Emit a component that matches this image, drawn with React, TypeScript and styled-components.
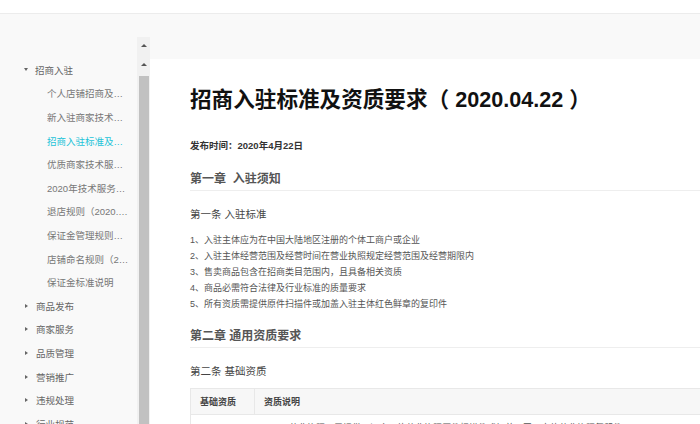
import React from "react";
import styled, { createGlobalStyle } from "styled-components";

const FONT = `"Liberation Sans", "Noto Sans CJK SC", sans-serif`;

const GlobalStyle = createGlobalStyle`
  html, body {
    margin: 0;
    padding: 0;
    width: 700px;
    height: 424px;
    overflow: hidden;
    background: #fff;
    font-family: ${FONT};
  }
  * {
    box-sizing: border-box;
  }
`;

const Page = styled.div`
  display: flex;
  flex-direction: column;
  width: 700px;
  height: 424px;
  overflow: hidden;
`;

const TopBar = styled.div`
  height: 14px;
  flex-shrink: 0;
  background: #fff;
  border-bottom: 1px solid #ececec;
  box-shadow: 0 1px 2px rgba(0, 0, 0, 0.03);
`;

const Body = styled.div`
  flex: 1;
  display: flex;
  background: #f9f9f9;
  overflow: hidden;
`;

const Sidebar = styled.nav`
  width: 137px;
  flex-shrink: 0;
  padding-top: 44px;
  display: flex;
  flex-direction: column;
`;

const NavRow = styled.div<{ $child?: boolean; $active?: boolean }>`
  height: 23.6px;
  flex-shrink: 0;
  display: flex;
  align-items: center;
  padding-left: ${(p) => (p.$child ? "47px" : "24px")};
  font-size: 9.5px;
  color: ${(p) => (p.$active ? "#1cc3d8" : p.$child ? "#777" : "#666")};
  white-space: nowrap;
`;

const Caret = styled.span<{ $open?: boolean }>`
  width: 0;
  height: 0;
  margin-right: ${(p) => (p.$open ? "7px" : "8px")};
  border-style: solid;
  border-color: transparent;
  ${(p) =>
    p.$open
      ? `border-width: 3px 2.5px 0 2.5px; border-top-color: #666;`
      : `border-width: 2.5px 0 2.5px 3px; border-left-color: #666; margin-left: 1px;`}
`;

const NavLabel = styled.span<{ $child?: boolean }>`
  display: block;
  max-width: ${(p) => (p.$child ? "82px" : "none")};
  overflow: hidden;
  text-overflow: ellipsis;
`;

const ScrollColumn = styled.div`
  width: 13px;
  flex-shrink: 0;
  margin-top: 23px;
  background: #f1f1f1;
  display: flex;
  flex-direction: column;
`;

const ScrollArrow = styled.div<{ $h: number }>`
  height: ${(p) => p.$h}px;
  flex-shrink: 0;
  display: flex;
  align-items: center;
  justify-content: center;
  &::after {
    content: "";
    width: 0;
    height: 0;
    border-style: solid;
    border-width: 0 3px 3px 3px;
    border-color: transparent transparent #555 transparent;
  }
`;

const ScrollThumb = styled.div`
  flex: 1;
  margin: 0 1px 0 2px;
  background: #c1c1c1;
`;

const Main = styled.main`
  flex: 1;
  padding-top: 45px;
  display: flex;
  flex-direction: column;
  overflow: hidden;
`;

const Article = styled.article`
  flex: 1;
  background: #fff;
  padding: 26px 0 0 40px;
  display: flex;
  flex-direction: column;
  color: #555;
`;

const Title = styled.h1`
  margin: 0;
  font-size: 21.6px;
  line-height: 30px;
  font-weight: 700;
  color: #111;
  white-space: nowrap;
`;

const Meta = styled.div`
  margin-top: 24px;
  font-size: 9.5px;
  line-height: 14px;
  font-weight: 700;
  color: #333;
`;

const Chapter = styled.h2<{ $top: number }>`
  margin: ${(p) => p.$top}px 0 0;
  padding-bottom: 2px;
  font-size: 12px;
  line-height: 18px;
  font-weight: 700;
  color: #555;
  border-bottom: 1px solid #eeeeee;
`;

const Section = styled.h3`
  margin: 15px 0 0;
  font-size: 10.5px;
  line-height: 16px;
  font-weight: 400;
  color: #444;
`;

const List = styled.ul`
  list-style: none;
  margin: 10px 0 0;
  padding: 0;
  font-size: 9px;
  line-height: 16px;
  color: #555;
`;

const Table = styled.table`
  margin-top: 9px;
  width: 100%;
  border-collapse: collapse;
  font-size: 9px;
  color: #555;
`;

const HeadCell = styled.th<{ $w?: number }>`
  width: ${(p) => (p.$w ? `${p.$w}px` : "auto")};
  height: 26px;
  padding: 0 9px;
  text-align: left;
  font-weight: 700;
  color: #444;
  background: #f7f7f7;
  border: 1px solid #e8e8e8;
  border-right-color: ${(p) => (p.$w ? "#e8e8e8" : "transparent")};
`;

const BodyCell = styled.td`
  height: 26px;
  padding: 0 9px 0 20px;
  border: 1px solid #e8e8e8;
  border-right-color: transparent;
  white-space: nowrap;
`;

const nav = [
  { label: "招商入驻", open: true },
  { label: "个人店铺招商及入驻规范", child: true },
  { label: "新入驻商家技术服务费说明", child: true },
  { label: "招商入驻标准及资质要求", child: true, active: true },
  { label: "优质商家技术服务费减免规则", child: true },
  { label: "2020年技术服务费标准", child: true },
  { label: "退店规则（2020.04.22）", child: true },
  { label: "保证金管理规则（2020）", child: true },
  { label: "店铺命名规则（2020.04.22）", child: true },
  { label: "保证金标准说明", child: true },
  { label: "商品发布" },
  { label: "商家服务" },
  { label: "品质管理" },
  { label: "营销推广" },
  { label: "违规处理" },
  { label: "行业规范" },
];

const rules = [
  "1、入驻主体应为在中国大陆地区注册的个体工商户或企业",
  "2、入驻主体经营范围及经营时间在营业执照规定经营范围及经营期限内",
  "3、售卖商品包含在招商类目范围内，且具备相关资质",
  "4、商品必需符合法律及行业标准的质量要求",
  "5、所有资质需提供原件扫描件或加盖入驻主体红色鲜章的复印件",
];

export default function App() {
  return (
    <Page>
      <GlobalStyle />
      <TopBar />
      <Body>
        <Sidebar>
          {nav.map((item) => (
            <NavRow key={item.label} $child={item.child} $active={item.active}>
              {!item.child && <Caret $open={item.open} />}
              <NavLabel $child={item.child}>{item.label}</NavLabel>
            </NavRow>
          ))}
        </Sidebar>
        <ScrollColumn>
          <ScrollArrow $h={16} />
          <ScrollArrow $h={23} />
          <ScrollThumb />
        </ScrollColumn>
        <Main>
          <Article>
            <Title>招商入驻标准及资质要求（ 2020.04.22 ）</Title>
            <Meta>发布时间：2020年4月22日</Meta>
            <Chapter $top={17}>第一章&nbsp;&nbsp;入驻须知</Chapter>
            <Section>第一条 入驻标准</Section>
            <List>
              {rules.map((r) => (
                <li key={r}>{r}</li>
              ))}
            </List>
            <Chapter $top={15}>第二章 通用资质要求</Chapter>
            <Section>第二条 基础资质</Section>
            <Table>
              <thead>
                <tr>
                  <HeadCell $w={64}>基础资质</HeadCell>
                  <HeadCell>资质说明</HeadCell>
                </tr>
              </thead>
              <tbody>
                <tr>
                  <BodyCell />
                  <BodyCell>
                    1、营业执照：需提供三证合一的营业执照原件扫描件或加盖公司公章的营业执照复印件
                  </BodyCell>
                </tr>
              </tbody>
            </Table>
          </Article>
        </Main>
      </Body>
    </Page>
  );
}
